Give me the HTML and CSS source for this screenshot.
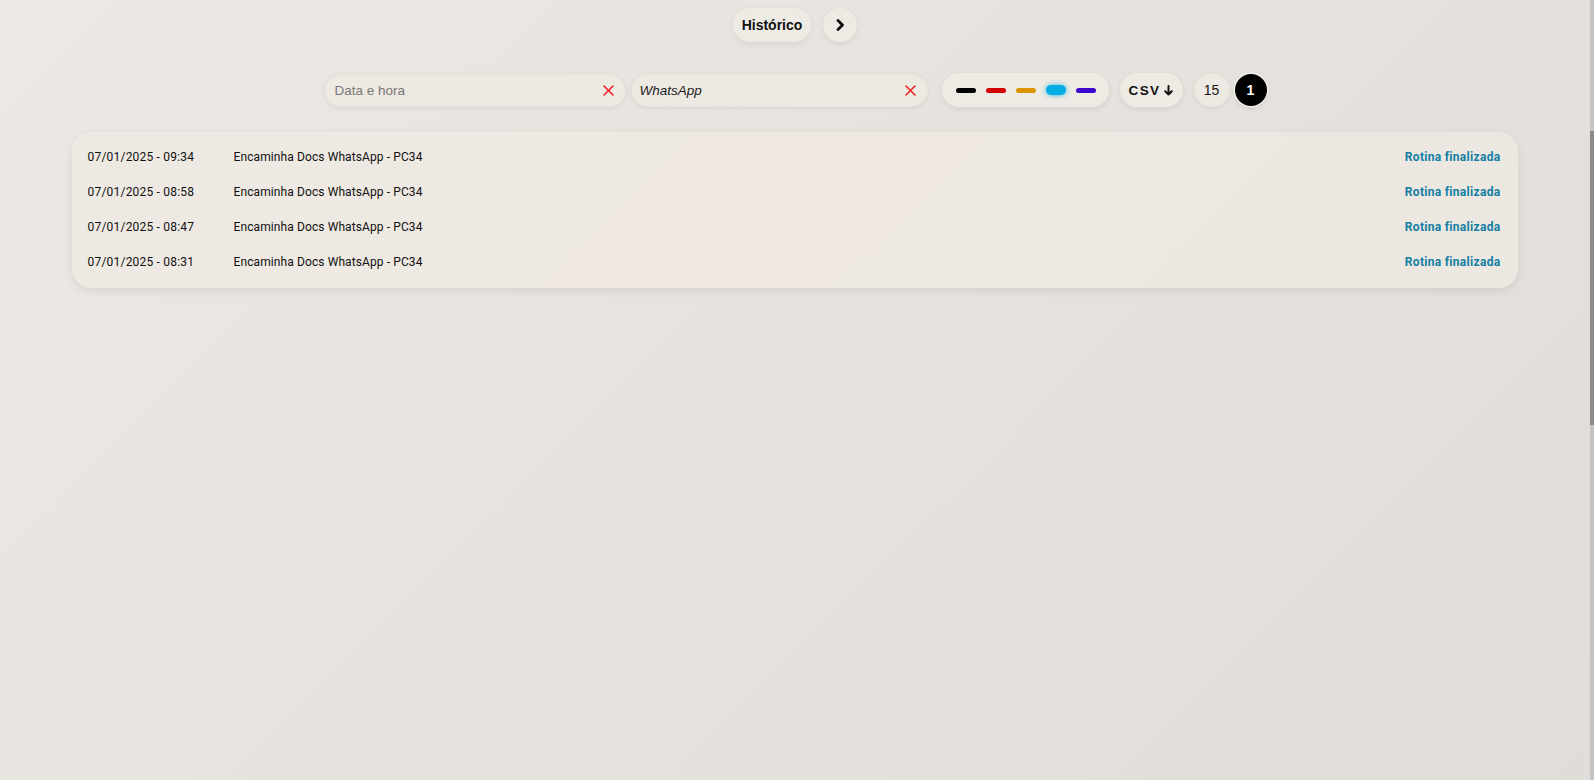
FILE: index.html
```html
<!DOCTYPE html>
<html lang="pt-BR">
<head>
<meta charset="utf-8">
<title>Histórico</title>
<link rel="stylesheet" href="styles.css">
</head>
<body>
<div class="app">
  <main class="main">
    <header class="topbar">
      <button class="hist-btn">Histórico</button>
      <button class="next-btn" aria-label="Próximo">
        <svg width="10" height="12" viewBox="0 0 10 12"><polyline points="3,1.5 7.5,6 3,10.5" fill="none" stroke="#111" stroke-width="2.8" stroke-linecap="round" stroke-linejoin="round"/></svg>
      </button>
    </header>

    <section class="controls">
      <div class="search">
        <span class="search-text placeholder">Data e hora</span>
        <svg class="clear" width="11" height="11" viewBox="0 0 11 11"><path d="M1 1 L10 10 M10 1 L1 10" stroke="#ee1c1c" stroke-width="1.5" stroke-linecap="round"/></svg>
      </div>
      <div class="search second">
        <span class="search-text value">WhatsApp</span>
        <svg class="clear" width="11" height="11" viewBox="0 0 11 11"><path d="M1 1 L10 10 M10 1 L1 10" stroke="#ee1c1c" stroke-width="1.5" stroke-linecap="round"/></svg>
      </div>
      <div class="colors">
        <span class="swatch black"></span>
        <span class="swatch red"></span>
        <span class="swatch orange"></span>
        <span class="swatch blue active"></span>
        <span class="swatch purple"></span>
      </div>
      <button class="csv-btn">CSV
        <svg width="9" height="11" viewBox="0 0 9 11"><path d="M4.5 1 V9.5 M1.2 6.2 L4.5 9.5 L7.8 6.2" fill="none" stroke="#111" stroke-width="2" stroke-linecap="round" stroke-linejoin="round"/></svg>
      </button>
      <div class="pager">
        <span class="page-size">15</span>
        <span class="page-num">1</span>
      </div>
    </section>

    <section class="card">
      <div class="row"><span class="date">07/01/2025 - 09:34</span><span class="name">Encaminha Docs WhatsApp - PC34</span><span class="status">Rotina finalizada</span></div>
      <div class="row"><span class="date">07/01/2025 - 08:58</span><span class="name">Encaminha Docs WhatsApp - PC34</span><span class="status">Rotina finalizada</span></div>
      <div class="row"><span class="date">07/01/2025 - 08:47</span><span class="name">Encaminha Docs WhatsApp - PC34</span><span class="status">Rotina finalizada</span></div>
      <div class="row"><span class="date">07/01/2025 - 08:31</span><span class="name">Encaminha Docs WhatsApp - PC34</span><span class="status">Rotina finalizada</span></div>
    </section>
  </main>
  <div class="scrollbar"><div class="thumb"></div></div>
</div>
</body>
</html>
```

FILE: styles.css
```css
* { box-sizing: border-box; }
html, body { margin: 0; padding: 0; height: 100%; overflow: hidden; }
body {
  font-family: "Liberation Sans", Arial, sans-serif;
  color: #111;
  background: linear-gradient(135deg, #ece9e4 0%, #e6e3de 50%, #e0ddd9 100%);
}
button { font-family: inherit; border: none; cursor: pointer; color: #111; padding: 0; }

.app { display: flex; height: 100vh; }
.main { flex: 1; min-width: 0; }

.scrollbar { width: 4px; background: #c3c3c3; padding-top: 131px; }
.thumb { height: 294px; background: #8b8b8b; }

.topbar {
  display: flex;
  justify-content: center;
  align-items: center;
  gap: 12px;
  padding-top: 8px;
}
.hist-btn {
  height: 34px;
  padding: 0 9px;
  border-radius: 17px;
  font-weight: bold;
  font-size: 14px;
  background: #eeebe5;
  box-shadow: 0 2px 6px rgba(0,0,0,0.08);
}
.next-btn {
  width: 34px;
  height: 34px;
  border-radius: 50%;
  background: #eeebe5;
  box-shadow: 0 2px 6px rgba(0,0,0,0.08);
  display: flex;
  align-items: center;
  justify-content: center;
}

.controls {
  display: flex;
  justify-content: center;
  align-items: center;
  margin-top: 31px;
  height: 34px;
}
.search {
  width: 302px;
  height: 33px;
  border-radius: 17px;
  background: #ede9e3;
  box-shadow: 0 1px 4px rgba(0,0,0,0.08), inset 0 0 3px rgba(0,0,0,0.06);
  display: flex;
  align-items: center;
  padding: 0 12px 0 11px;
}
.search.second { width: 297px; margin-left: 5px; padding-left: 9px; }
.search-text { flex: 1; font-size: 13.5px; }
.placeholder { color: #7a7875; }
.value { font-style: italic; color: #222; }
.clear { flex: none; }

.colors {
  margin-left: 14px;
  height: 34px;
  width: 167px;
  padding: 0 13px 0 14px;
  border-radius: 17px;
  background: #eeebe5;
  box-shadow: 0 2px 6px rgba(0,0,0,0.08);
  display: flex;
  align-items: center;
  gap: 10px;
}
.swatch { width: 20px; height: 5px; border-radius: 3px; display: block; }
.black { background: #000; }
.red { background: #d30000; }
.orange { background: #db9400; }
.blue { background: #05ade6; }
.purple { background: #3c06cc; }
.swatch.active { height: 10px; border-radius: 5px; box-shadow: 0 0 5px rgba(5,173,230,0.8); }

.csv-btn {
  margin-left: 11px;
  width: 63px;
  height: 34px;
  border-radius: 17px;
  background: #eeebe5;
  box-shadow: 0 2px 6px rgba(0,0,0,0.08);
  font-weight: bold;
  font-size: 13.5px;
  letter-spacing: 1.4px;
  display: flex;
  align-items: center;
  justify-content: center;
  gap: 4px;
}

.pager {
  margin-left: 11px;
  display: flex;
  align-items: center;
  gap: 5px;
}
.page-size {
  width: 36px;
  height: 34px;
  border-radius: 17px;
  background: #edeae4;
  box-shadow: 0 1px 4px rgba(0,0,0,0.08), inset 0 0 3px rgba(0,0,0,0.05);
  display: flex;
  align-items: center;
  justify-content: center;
  font-size: 14px;
}
.page-num {
  width: 32px;
  height: 32px;
  border-radius: 50%;
  background: #000;
  color: #fff;
  font-weight: bold;
  font-size: 14px;
  display: flex;
  align-items: center;
  justify-content: center;
  box-shadow: 0 0 0 1.5px #f2efea, 0 2px 4px rgba(0,0,0,0.15);
}

.card {
  width: 91%;
  margin: 25px auto 0;
  border-radius: 20px;
  background: linear-gradient(135deg, #eeeae3 0%, #eee8e1 50%, #ebe7e1 100%);
  box-shadow: 0 3px 10px rgba(0,0,0,0.08);
  padding: 7px 18px 9px 16px;
  font-family: Roboto, "Liberation Sans", sans-serif;
  font-size: 12px;
}
.row {
  display: grid;
  grid-template-columns: 146px 1fr auto;
  align-items: center;
  height: 35px;
}
.date { letter-spacing: 0.2px; }
.name { letter-spacing: 0.1px; }
.status { font-weight: bold; color: #147fa3; letter-spacing: 0.3px; }
```
